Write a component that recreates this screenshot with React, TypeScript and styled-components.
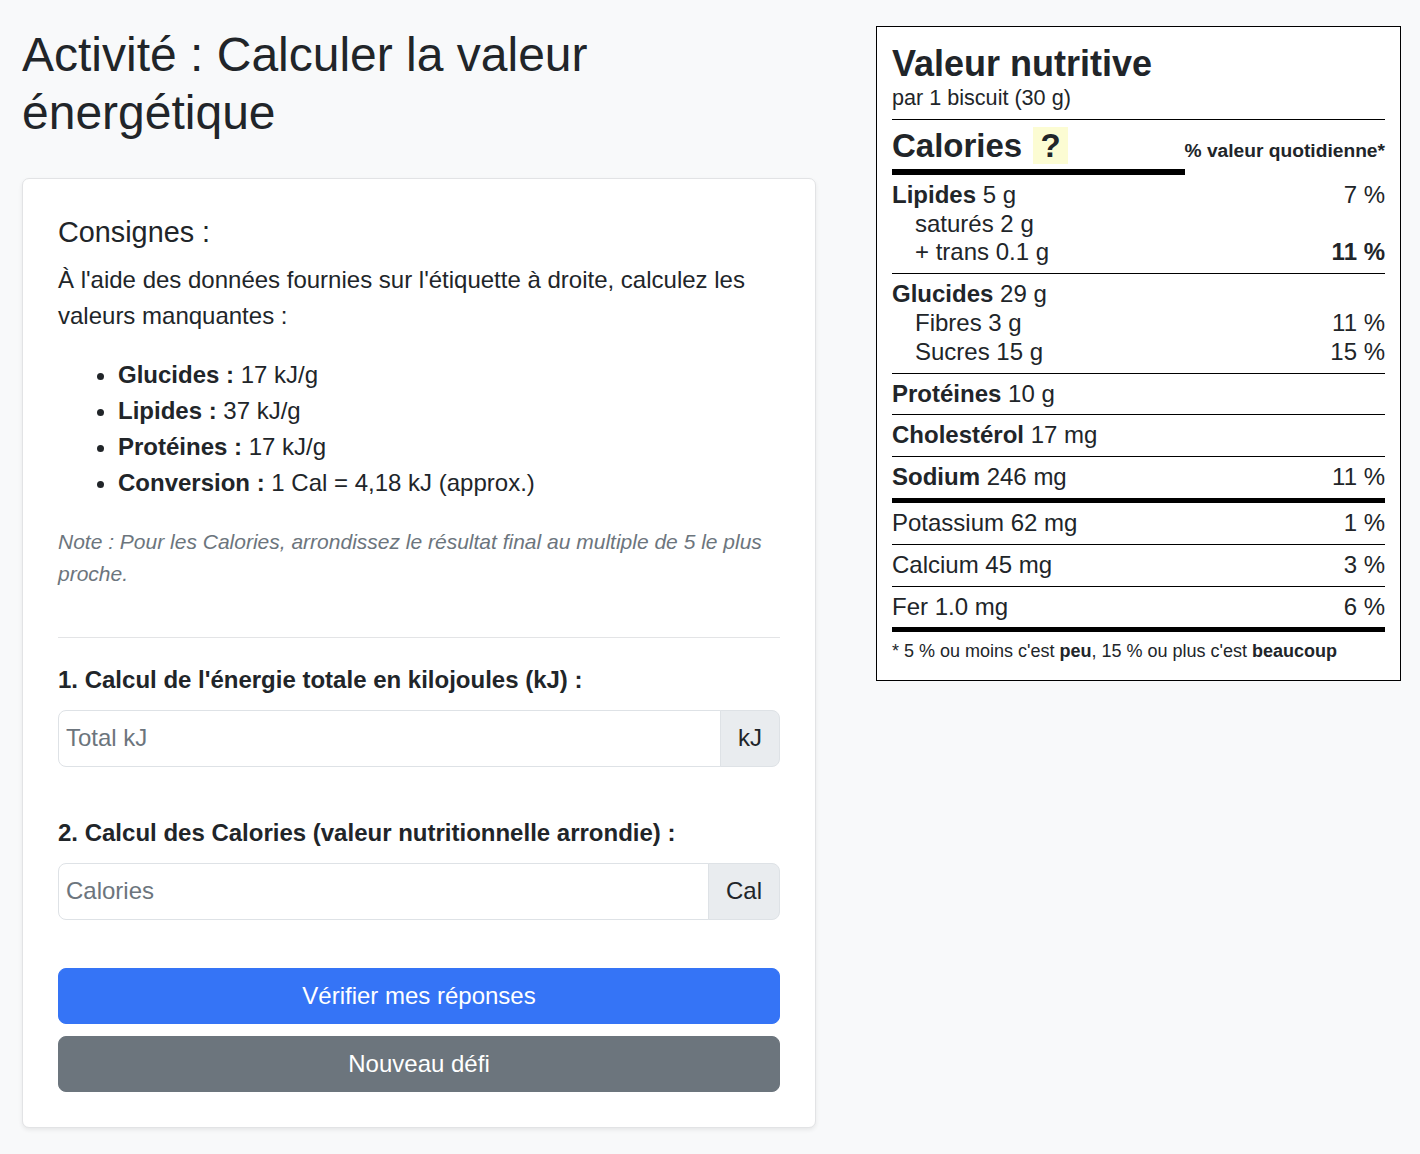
import React from 'react';
import styled, { createGlobalStyle } from 'styled-components';

const GlobalStyle = createGlobalStyle`
  body {
    margin: 0;
    background: #f8f9fa;
    color: #212529;
    font-family: "Liberation Sans", Arial, sans-serif;
  }
  * { box-sizing: border-box; }
`;

const Page = styled.div`
  display: flex;
  align-items: flex-start;
  gap: 60px;
  padding: 26px 20px 20px 22px;
`;

const LeftCol = styled.div`
  flex: 0 0 794px;
`;

const Title = styled.h1`
  margin: 0 0 37px;
  font-size: 48px;
  line-height: 57.6px;
  font-weight: 400;
`;

const Card = styled.div`
  background: #fff;
  border: 1px solid #e2e3e5;
  border-radius: 7px;
  box-shadow: 0 2px 4px rgba(0, 0, 0, 0.075);
  padding: 35px 35px 35px;
`;

const SectionTitle = styled.h4`
  margin: 0 0 12px;
  font-size: 28.8px;
  line-height: 36px;
  font-weight: 400;
`;

const Lead = styled.p`
  margin: 0 0 23px;
  font-size: 24px;
  line-height: 36px;
`;

const FactList = styled.ul`
  margin: 0 0 25px;
  padding-left: 60px;
  font-size: 24px;
  line-height: 36px;

  b { font-weight: 700; }
`;

const Note = styled.p`
  margin: 0;
  font-size: 21px;
  line-height: 31.5px;
  font-style: italic;
  color: #6c757d;
`;

const Divider = styled.hr`
  margin: 48px 0 28px;
  border: 0;
  border-top: 1px solid #e3e4e6;
`;

const FieldLabel = styled.label`
  display: block;
  margin-bottom: 15px;
  font-size: 24px;
  line-height: 28.8px;
  font-weight: 700;
`;

const InputGroup = styled.div<{ $spaced?: boolean }>`
  display: flex;
  margin-bottom: ${p => (p.$spaced ? '52px' : '48px')};
`;

const Input = styled.input`
  flex: 1;
  min-width: 0;
  font-family: inherit;
  font-size: 24px;
  line-height: 36px;
  padding: 9.5px 7px;
  color: #212529;
  background: #fff;
  border: 1px solid #dee2e6;
  border-radius: 8px 0 0 8px;
  outline: none;

  &::placeholder { color: #6c757d; }
`;

const Addon = styled.span`
  display: flex;
  align-items: center;
  padding: 0 17px;
  margin-left: -1px;
  font-size: 24px;
  color: #212529;
  background: #e9ecef;
  border: 1px solid #dee2e6;
  border-radius: 0 8px 8px 0;
`;

const ButtonStack = styled.div`
  display: flex;
  flex-direction: column;
  gap: 12px;
`;

const Button = styled.button<{ $variant: 'primary' | 'secondary' }>`
  width: 100%;
  padding: 9px 16px;
  font-family: inherit;
  font-size: 24px;
  line-height: 36px;
  color: #fff;
  background: ${p => (p.$variant === 'primary' ? '#3574f6' : '#6c757d')};
  border: 1px solid ${p => (p.$variant === 'primary' ? '#3574f6' : '#6c757d')};
  border-radius: 8px;
  cursor: pointer;
`;

/* étiquette nutritionnelle */

const LabelBox = styled.div`
  flex: 0 0 525px;
  background: #fff;
  border: 1px solid #000;
  padding: 15px;
  color: #212529;
`;

const LabelTitle = styled.div`
  font-size: 36px;
  line-height: 43.2px;
  font-weight: 700;
`;

const Serving = styled.div`
  font-size: 21.6px;
  line-height: 26px;
  padding-bottom: 8px;
  border-bottom: 1px solid #000;
`;

const HeaderRow = styled.div`
  display: flex;
  justify-content: space-between;
  align-items: baseline;
`;

const CaloriesBlock = styled.div`
  flex: 0 1 60%;
  margin-top: 5.5px;
  padding-bottom: 3.5px;
  border-bottom: 6px solid #000;
  font-size: 33px;
  line-height: 39.6px;
  font-weight: 700;
  white-space: nowrap;
`;

const Unknown = styled.span`
  margin-left: 2px;
  padding: 0 7px;
  background: #fcfcd3;
`;

const DvHead = styled.span`
  flex-shrink: 0;
  font-size: 19.2px;
  font-weight: 700;
  white-space: nowrap;
`;

const Section = styled.div<{ $thick?: boolean }>`
  padding: 6px 0;
  border-bottom: ${p => (p.$thick ? '5px' : '1px')} solid #000;
`;

const Row = styled.div<{ $indent?: boolean }>`
  display: flex;
  justify-content: space-between;
  padding-left: ${p => (p.$indent ? '23px' : '0')};
  font-size: 24px;
  line-height: 28.8px;

  b { font-weight: 700; }
`;

const Footnote = styled.div`
  padding-top: 7px;
  font-size: 18px;
  line-height: 25.2px;

  b { font-weight: 700; }
`;

const NutritionLabel = () => (
  <LabelBox>
    <LabelTitle>Valeur nutritive</LabelTitle>
    <Serving>par 1 biscuit (30 g)</Serving>
    <HeaderRow>
      <CaloriesBlock>
        Calories <Unknown>?</Unknown>
      </CaloriesBlock>
      <DvHead>% valeur quotidienne*</DvHead>
    </HeaderRow>
    <Section>
      <Row><span><b>Lipides</b> 5 g</span><span>7 %</span></Row>
      <Row $indent><span>saturés 2 g</span></Row>
      <Row $indent><span>+ trans 0.1 g</span><b>11 %</b></Row>
    </Section>
    <Section>
      <Row><span><b>Glucides</b> 29 g</span></Row>
      <Row $indent><span>Fibres 3 g</span><span>11 %</span></Row>
      <Row $indent><span>Sucres 15 g</span><span>15 %</span></Row>
    </Section>
    <Section>
      <Row><span><b>Protéines</b> 10 g</span></Row>
    </Section>
    <Section>
      <Row><span><b>Cholestérol</b> 17 mg</span></Row>
    </Section>
    <Section $thick>
      <Row><span><b>Sodium</b> 246 mg</span><span>11 %</span></Row>
    </Section>
    <Section>
      <Row><span>Potassium 62 mg</span><span>1 %</span></Row>
    </Section>
    <Section>
      <Row><span>Calcium 45 mg</span><span>3 %</span></Row>
    </Section>
    <Section $thick>
      <Row><span>Fer 1.0 mg</span><span>6 %</span></Row>
    </Section>
    <Footnote>
      * 5 % ou moins c'est <b>peu</b>, 15 % ou plus c'est <b>beaucoup</b>
    </Footnote>
  </LabelBox>
);

export default function App() {
  return (
    <>
      <GlobalStyle />
      <Page>
        <LeftCol>
          <Title>Activité : Calculer la valeur énergétique</Title>
          <Card>
            <SectionTitle>Consignes :</SectionTitle>
            <Lead>
              À l'aide des données fournies sur l'étiquette à droite, calculez les valeurs manquantes :
            </Lead>
            <FactList>
              <li><b>Glucides :</b> 17 kJ/g</li>
              <li><b>Lipides :</b> 37 kJ/g</li>
              <li><b>Protéines :</b> 17 kJ/g</li>
              <li><b>Conversion :</b> 1 Cal = 4,18 kJ (approx.)</li>
            </FactList>
            <Note>
              Note : Pour les Calories, arrondissez le résultat final au multiple de 5 le plus proche.
            </Note>
            <Divider />
            <FieldLabel htmlFor="kj">1. Calcul de l'énergie totale en kilojoules (kJ) :</FieldLabel>
            <InputGroup $spaced>
              <Input id="kj" placeholder="Total kJ" />
              <Addon>kJ</Addon>
            </InputGroup>
            <FieldLabel htmlFor="cal">2. Calcul des Calories (valeur nutritionnelle arrondie) :</FieldLabel>
            <InputGroup>
              <Input id="cal" placeholder="Calories" />
              <Addon>Cal</Addon>
            </InputGroup>
            <ButtonStack>
              <Button $variant="primary">Vérifier mes réponses</Button>
              <Button $variant="secondary">Nouveau défi</Button>
            </ButtonStack>
          </Card>
        </LeftCol>
        <NutritionLabel />
      </Page>
    </>
  );
}
